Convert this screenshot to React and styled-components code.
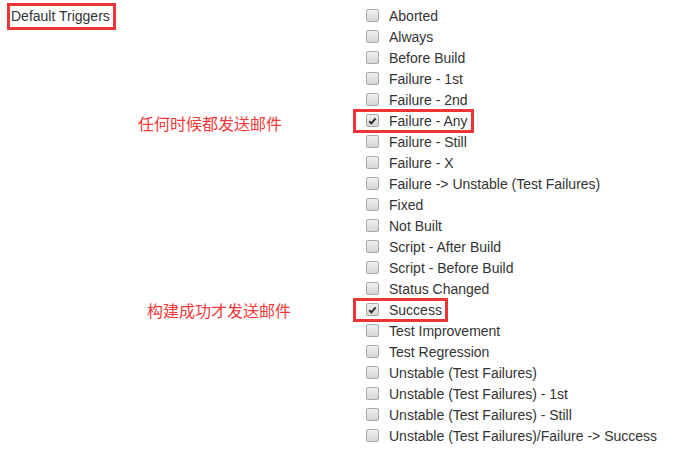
import React from "react";
import styled, { createGlobalStyle } from "styled-components";

const Global = createGlobalStyle`
  html, body { margin: 0; padding: 0; background: #fff; }
  body { font-family: "Liberation Sans", Arial, sans-serif; color: #333; }
`;

const Page = styled.div`
  display: grid;
  grid-template-columns: 366px 1fr;
  padding-top: 5px;
  width: 683px;
  height: 458px;
  box-sizing: border-box;
`;

const LabelCell = styled.div`
  padding-left: 7px;
  margin-top: -2px;
`;

const SectionLabel = styled.div`
  display: inline-flex;
  align-items: center;
  height: 27px;
  box-sizing: border-box;
  padding: 0 3px 2px 1px;
  border: 3px solid #ee3535;
  font-size: 14px;
  color: #333;
`;

const List = styled.div`
  display: flex;
  flex-direction: column;
`;

const Row = styled.div`
  position: relative;
  display: flex;
  align-items: center;
  height: 21px;
`;

const Item = styled.label`
  display: inline-flex;
  align-items: center;
  gap: 10px;
  font-size: 14px;
  color: #333;
  white-space: nowrap;
  box-sizing: border-box;
  ${(p) =>
    p.$marked
      ? `
    border: 3px solid #ee3535;
    height: 24px;
    margin: -1.5px 0 -1.5px -13px;
    padding: 0 3px 0 10px;
  `
      : ""}
`;

const Box = styled.span`
  position: relative;
  width: 13px;
  height: 13px;
  box-sizing: border-box;
  border: 1px solid #a9a9a9;
  border-radius: 2px;
  background: linear-gradient(#f0f0f0, #d6d6d6);
  flex: none;
  display: flex;
  align-items: center;
  justify-content: center;
`;

const Note = styled.span`
  position: absolute;
  left: ${(p) => p.$left}px;
  top: 50%;
  transform: translateY(calc(-50% + ${(p) => p.$dy}px));
  font-family: "Noto Sans CJK SC", sans-serif;
  font-size: 16px;
  color: #f03a3a;
  white-space: nowrap;
`;

const options = [
  "Aborted",
  "Always",
  "Before Build",
  "Failure - 1st",
  "Failure - 2nd",
  "Failure - Any",
  "Failure - Still",
  "Failure - X",
  "Failure -> Unstable (Test Failures)",
  "Fixed",
  "Not Built",
  "Script - After Build",
  "Script - Before Build",
  "Status Changed",
  "Success",
  "Test Improvement",
  "Test Regression",
  "Unstable (Test Failures)",
  "Unstable (Test Failures) - 1st",
  "Unstable (Test Failures) - Still",
  "Unstable (Test Failures)/Failure -> Success",
];

const notes = {
  "Failure - Any": { text: "任何时候都发送邮件", left: -228, dy: 2 },
  Success: { text: "构建成功才发送邮件", left: -219, dy: 0 },
};

const Check = () => (
  <svg width="9" height="8" viewBox="0 0 9 8">
    <path d="M1.2 4.3 L3.4 6.4 L7.6 1.4" fill="none" stroke="#2b2b2b" strokeWidth="1.9" />
  </svg>
);

export default function App() {
  return (
    <>
      <Global />
      <Page>
        <LabelCell>
          <SectionLabel>Default Triggers</SectionLabel>
        </LabelCell>
        <List>
          {options.map((o) => {
            const n = notes[o];
            return (
              <Row key={o}>
                {n && (
                  <Note $left={n.left} $dy={n.dy}>
                    {n.text}
                  </Note>
                )}
                <Item $marked={!!n}>
                  <Box>{n && <Check />}</Box>
                  {o}
                </Item>
              </Row>
            );
          })}
        </List>
      </Page>
    </>
  );
}
